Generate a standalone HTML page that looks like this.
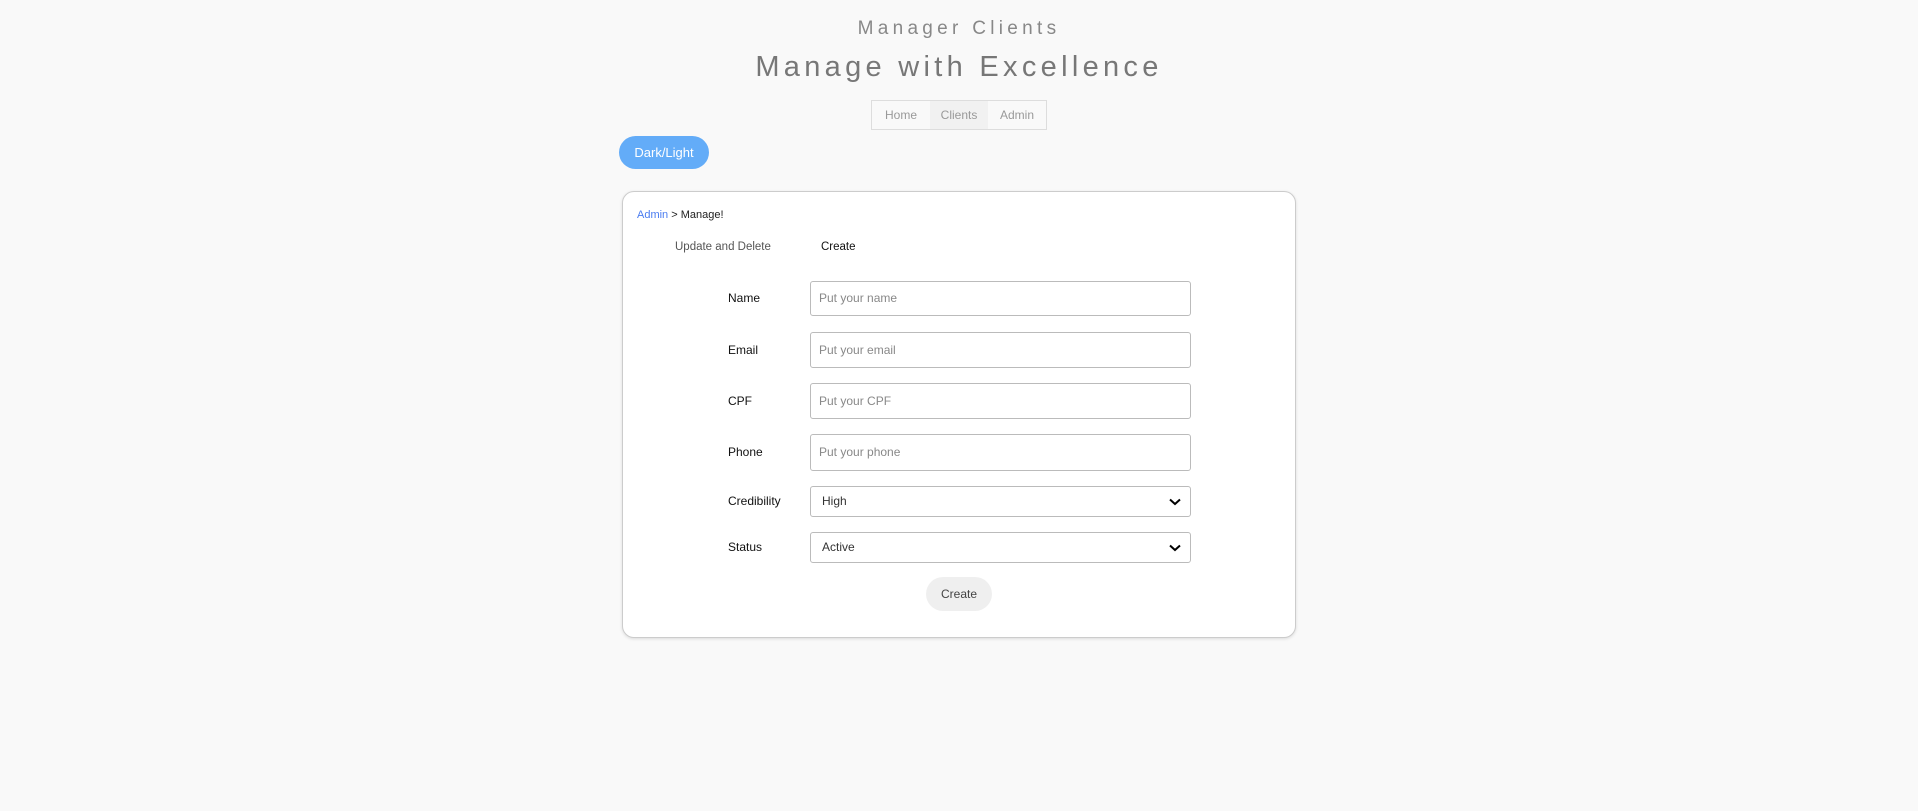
<!DOCTYPE html>
<html><head><meta charset="utf-8"><style>
*{box-sizing:border-box;margin:0;padding:0}
body{width:1918px;height:811px;background:#f9f9f9;font-family:"Liberation Sans",sans-serif;position:relative;overflow:hidden}
.a{position:absolute}
.t1{left:0;width:1918px;text-align:center;top:18px;font-size:19px;letter-spacing:4.3px;color:#888}
.t2{left:0;width:1918px;text-align:center;top:51px;font-size:29px;letter-spacing:4.3px;color:#777}
.nav{left:871px;top:100px;width:176px;height:30px;border:1px solid #ddd;display:flex;font-size:12px;color:#999}
.nav div{flex:1;text-align:center;line-height:28px}
.btn{left:619px;top:136px;width:90px;height:33px;border-radius:17px;background:#63acf8;color:#fff;font-size:13px;text-align:center;line-height:33px}
.card{left:622px;top:191px;width:674px;height:447px;background:#fff;border:1px solid #ccc;border-radius:12px;box-shadow:0 1px 3px rgba(0,0,0,.12)}
.lbl{font-size:12px;color:#111}
.inp{left:810px;width:381px;border:1px solid #bbb;border-radius:3px;background:#fff;font-size:12px;color:#888;padding-left:8px}
.sel{color:#333;padding-left:11px}
.chev{position:absolute;right:9px;top:50%;margin-top:-4px}
</style></head><body>
<div class="a t1">Manager Clients</div>
<div class="a t2">Manage with Excellence</div>
<div class="a nav"><div>Home</div><div style="background:#f1f1f1">Clients</div><div>Admin</div></div>
<div class="a btn">Dark/Light</div>
<div class="a card"></div>
<div class="a" style="left:637px;top:209px;font-size:11px;color:#222"><span style="color:#4a7cf0">Admin</span> &gt; Manage!</div>
<div class="a" style="left:675px;top:241px;font-size:11.5px;color:#555">Update and Delete</div>
<div class="a" style="left:821px;top:241px;font-size:11.5px;color:#111">Create</div>

<div class="a lbl" style="left:728px;top:291px">Name</div>
<div class="a inp" style="top:281px;height:35px;line-height:33px">Put your name</div>
<div class="a lbl" style="left:728px;top:343px">Email</div>
<div class="a inp" style="top:332px;height:36px;line-height:34px">Put your email</div>
<div class="a lbl" style="left:728px;top:394px">CPF</div>
<div class="a inp" style="top:383px;height:36px;line-height:34px">Put your CPF</div>
<div class="a lbl" style="left:728px;top:445px">Phone</div>
<div class="a inp" style="top:434px;height:37px;line-height:35px">Put your phone</div>
<div class="a lbl" style="left:728px;top:494px">Credibility</div>
<div class="a inp sel" style="top:486px;height:31px;line-height:29px">High<svg class="chev" width="12" height="8" viewBox="0 0 12 8"><path d="M1 1.5L6 6L11 1.5" stroke="#000" stroke-width="2" fill="none"/></svg></div>
<div class="a lbl" style="left:728px;top:540px">Status</div>
<div class="a inp sel" style="top:532px;height:31px;line-height:29px">Active<svg class="chev" width="12" height="8" viewBox="0 0 12 8"><path d="M1 1.5L6 6L11 1.5" stroke="#000" stroke-width="2" fill="none"/></svg></div>
<div class="a" style="left:926px;top:577px;width:66px;height:34px;border-radius:17px;background:#efefef;font-size:12px;color:#444;text-align:center;line-height:34px">Create</div>
</body></html>
